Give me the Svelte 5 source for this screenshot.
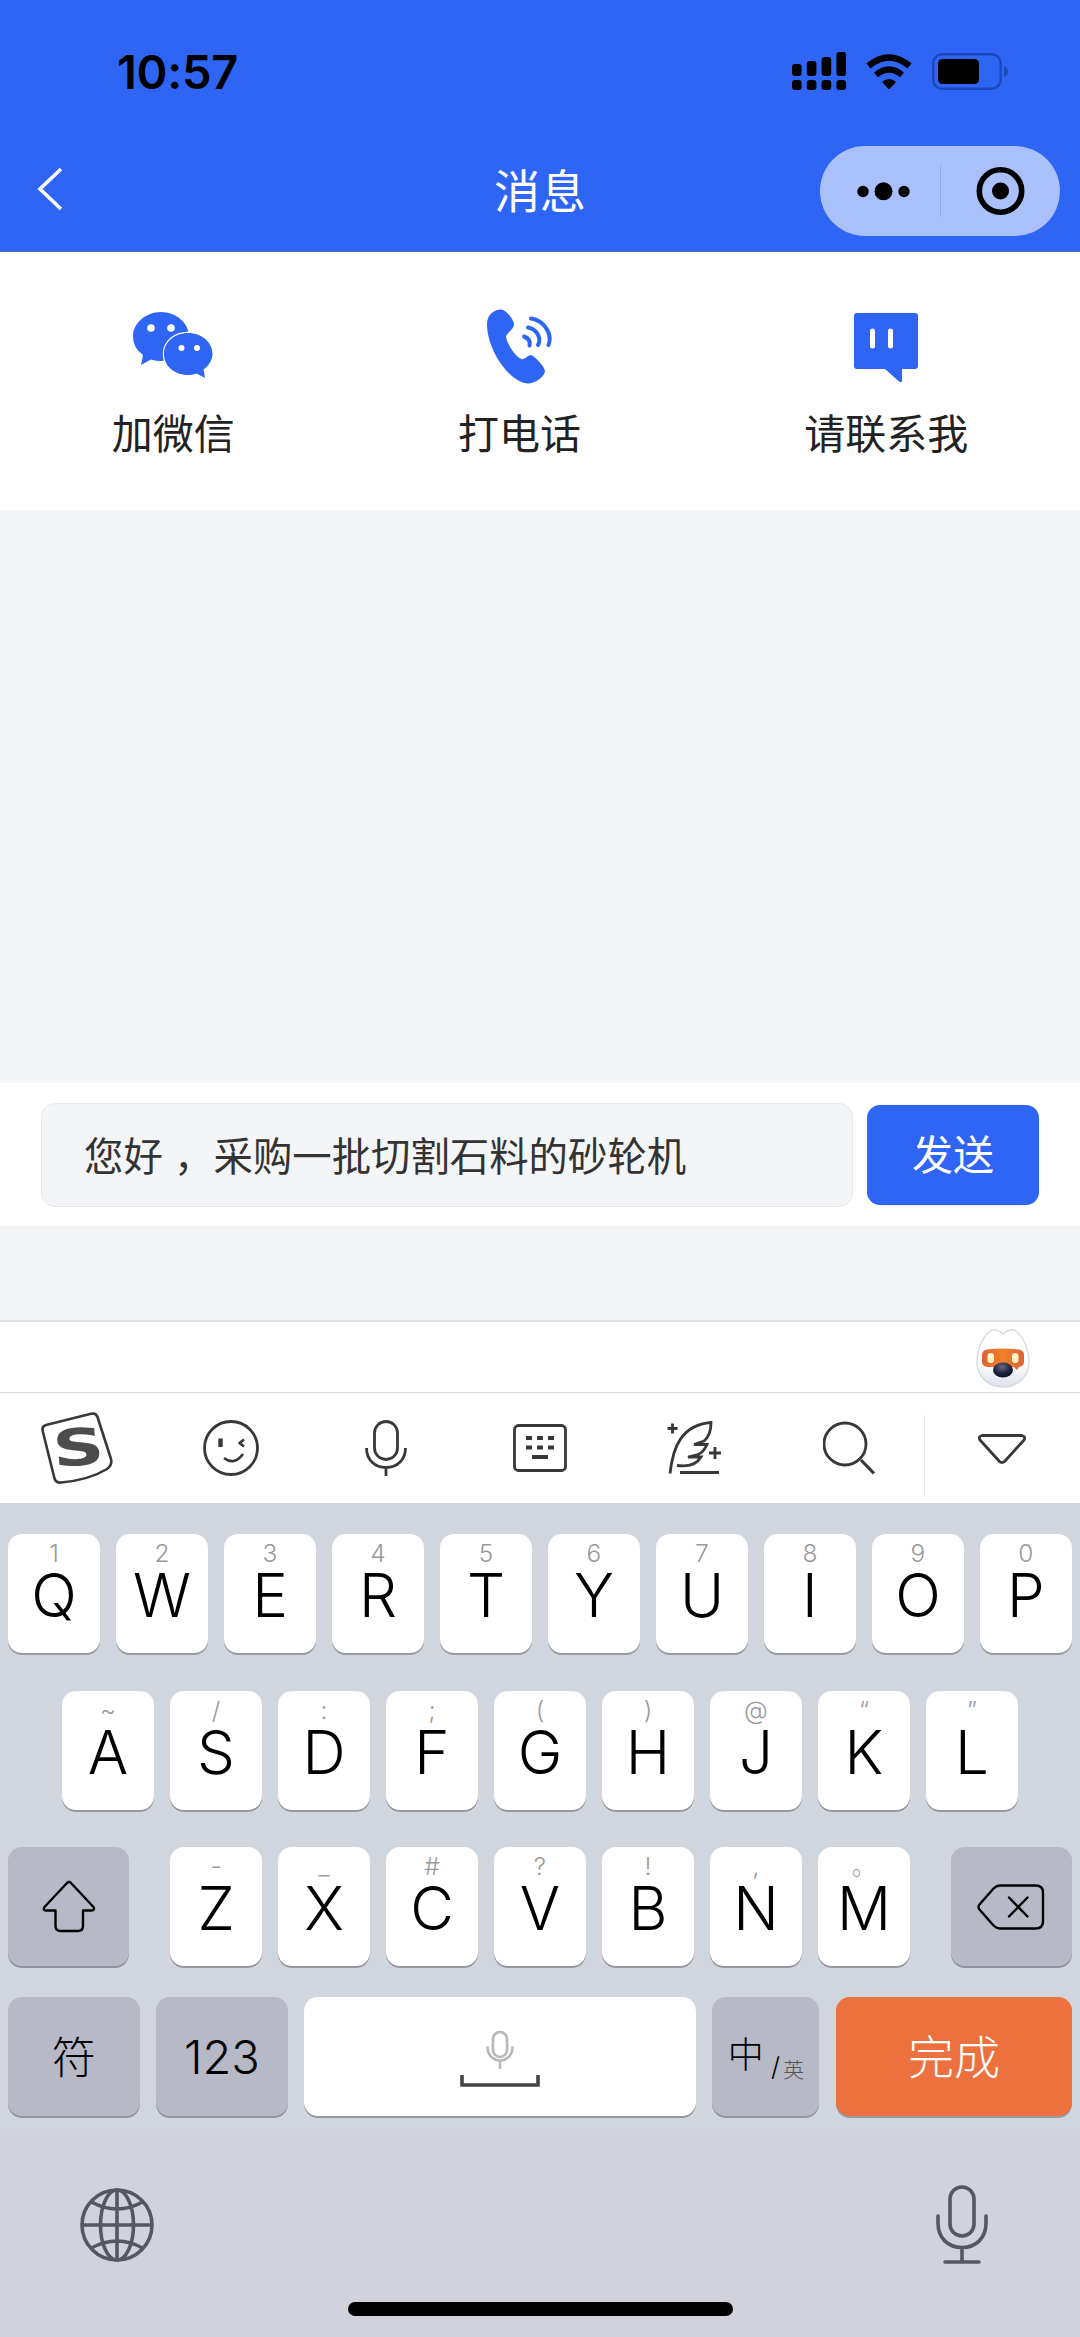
<script>
    let message = '您好 ，采购一批切割石料的砂轮机';

    const signal = [12, 15, 19, 24];

    const topRow = [
        ['Q', '1'], ['W', '2'], ['E', '3'], ['R', '4'], ['T', '5'],
        ['Y', '6'], ['U', '7'], ['I', '8'], ['O', '9'], ['P', '0']
    ];
    const middleRow = [
        ['A', '~'], ['S', '/'], ['D', ':'], ['F', ';'], ['G', '('],
        ['H', ')'], ['J', '@'], ['K', '“'], ['L', '”']
    ];
    const bottomRow = [
        ['Z', '-'], ['X', '_'], ['C', '#'], ['V', '?'], ['B', '!'], ['N', ','], ['M', '。']
    ];
</script>

<div class="screen">
    <header>
        <div class="status">
            <span class="time">10:57</span>
            <div class="status-icons">
                <svg width="54" height="38" viewBox="0 0 54 38">
                    {#each signal as h, i}
                        <rect x={i * 14.8} y={24 - h} width="9.6" height={h} rx="3" />
                        <rect x={i * 14.8} y="28" width="9.6" height="10" rx="3" />
                    {/each}
                </svg>
                <svg class="wifi" width="46" height="35" viewBox="0 0 46 35">
                    <path d="M2.500 12Q23-5 43.500 12" fill="none" stroke="#000" stroke-width="6.500" />
                    <path d="M10 21Q23 10 36 21" fill="none" stroke="#000" stroke-width="6.200" />
                    <path d="M16 28Q23 22 30 28L24 34.500Q23 35.500 22 34.500Z" />
                </svg>
                <svg width="76" height="37" viewBox="0 0 76 37">
                    <rect x="1.200" y="1.200" width="67.500" height="34.500" rx="9" fill="none" stroke="#1c48bc" stroke-width="2.400" />
                    <rect x="6" y="6" width="41" height="25" rx="4.500" />
                    <path d="M72 13Q76 15 76 18.500T72 24Z" fill="#1c48bc" />
                </svg>
            </div>
        </div>
        <div class="nav">
            <svg class="back" width="26" height="44" viewBox="0 0 26 44">
                <path d="M24 2L3 22L24 42" fill="none" stroke="#fff" stroke-width="3.600" />
            </svg>
            <h1>消息</h1>
            <div class="capsule">
                <svg width="120" height="90" viewBox="0 0 120 90">
                    <circle cx="43" cy="45.500" r="5.700" />
                    <circle cx="63.500" cy="45.300" r="9" />
                    <circle cx="84" cy="45.500" r="5.700" />
                </svg>
                <span class="divider"></span>
                <svg width="119" height="90" viewBox="0 0 119 90">
                    <circle cx="59.500" cy="45" r="21.200" fill="none" stroke="#000" stroke-width="5.600" />
                    <circle cx="59.500" cy="45" r="8.500" />
                </svg>
            </div>
        </div>
    </header>

    <section class="actions">
        <button class="action">
            <svg width="80" height="76" viewBox="0 -3 80 76">
                <path d="M28 0C43 0 56 11 56 24.500S43 49 28 49Q23 49 18 47.500L8 53L10 43Q0 36 0 24.500C0 11 13 0 28 0Z" />
                <path d="M55 21C68.500 21 79.500 30 79.500 42Q79.500 51 70.500 57.500L72 66L63.500 61.500Q59 63 55 63C41.500 63 31 54 31 42S41.500 21 55 21Z" stroke="#fff" stroke-width="2.500" paint-order="stroke" />
                <g fill="#fff">
                    <circle cx="18" cy="16" r="3.800" />
                    <circle cx="38" cy="16" r="3.800" />
                    <circle cx="48.500" cy="36" r="3" />
                    <circle cx="64" cy="36" r="3" />
                </g>
            </svg>
            <span>加微信</span>
        </button>
        <button class="action">
            <svg class="phone" width="66" height="76" viewBox="0 0 66 76">
                <path d="M14 0.500C8 0.500 0 5 0 15C0 42 24 75 42 74.500C49 74 58 67 58 62C58 58 48 47 43.500 46C41 46 37 51.500 34 50C27 46 20 34 19 28C19 24 27 21 27 15C27 11 19 0.500 14 0.500Z" />
                <g fill="none" stroke="#2f65f5" stroke-width="4" stroke-linecap="round">
                    <path d="M44 9.500C56 11 66 24 61.500 36" />
                    <path d="M41 18.500C49 20 55 28 51 36" />
                    <path d="M37 27.500Q44 30 42.500 36.500" />
                </g>
            </svg>
            <span>打电话</span>
        </button>
        <button class="action">
            <svg width="64" height="76" viewBox="0 0 64 76">
                <path d="M3 4H61Q64 4 64 7V57Q64 60 61 60H48V72Q48 74 45 72.500L31 60H3Q0 60 0 57V7Q0 4 3 4Z" />
                <path d="M18.500 22V37M36.500 22V37" stroke="#fff" stroke-width="5" stroke-linecap="round" />
            </svg>
            <span>请联系我</span>
        </button>
    </section>

    <main></main>

    <div class="composer">
        <div class="field">{message}</div>
        <button class="send">发送</button>
    </div>

    <div class="keyboard">
        <div class="candidates">
            <svg width="60" height="66" viewBox="0 0 60 66">
                <defs>
                    <linearGradient id="fur" x1="0" y1="0" x2="0" y2="1">
                        <stop offset="0.550" stop-color="#fff" />
                        <stop offset="1" stop-color="#dce1ec" />
                    </linearGradient>
                    <radialGradient id="nose" cx="0.450" cy="0.300" r="0.700">
                        <stop offset="0" stop-color="#666b86" />
                        <stop offset="0.600" stop-color="#20243a" />
                        <stop offset="1" stop-color="#111426" />
                    </radialGradient>
                    <linearGradient id="mask" x1="0" y1="0" x2="1" y2="0">
                        <stop offset="0" stop-color="#dd6238" />
                        <stop offset="0.500" stop-color="#f08128" />
                        <stop offset="1" stop-color="#dd6238" />
                    </linearGradient>
                </defs>
                <path d="M30 5C26 1 20-1 16 3C8 10 4 23 4 33C4 48 16 58 30 58S56 48 56 33C56 23 52 10 44 3C40-1 34 1 30 5Z" fill="url(#fur)" stroke="#d8dae0" stroke-width="1.400" />
                <path d="M14 20.500Q30 18.500 46 20.500Q51 21.500 51 26V33Q51 37 46 38L44 41L41 38H14Q9 37 9 33V26Q9 21.500 14 20.500Z" fill="url(#mask)" />
                <rect x="14.500" y="24" width="6.500" height="10" rx="3.200" fill="#fff3c4" />
                <rect x="39" y="24" width="6.500" height="10" rx="3.200" fill="#fff3c4" />
                <ellipse cx="30" cy="41" rx="10" ry="7.500" fill="url(#nose)" />
            </svg>
        </div>

        <div class="toolbar">
            <div class="tool">
                <svg width="72" height="72" viewBox="0 0 72 72">
                    <path d="M5 13L50 1.700Q55 0.500 56.500 5L70 47Q71.500 53 66 57Q48 68 20 70.500Q15 71 13.500 66.500L1.700 19Q0.500 14.500 5 13Z" stroke-width="2.600" />
                    <text class="logo" transform="translate(13 55) rotate(-4) scale(1.400 1)">S</text>
                </svg>
            </div>
            <div class="tool">
                <svg width="56" height="56" viewBox="0 0 56 56">
                    <circle cx="28" cy="28" r="26.500" />
                    <path d="M17.500 18.500V27" stroke-width="4.400" />
                    <path d="M41 19.500L36.500 23L41 26.500M21 38Q31 46 40 34" stroke-width="2.700" />
                </svg>
            </div>
            <div class="tool">
                <svg width="42" height="56" viewBox="0 0 42 56">
                    <rect x="9.500" y="1.500" width="23" height="38" rx="11.500" />
                    <path d="M1.500 28C1.500 40 10 47.500 21 47.500S40.500 40 40.500 28M21 48V56" />
                </svg>
            </div>
            <div class="tool">
                <svg width="54" height="48" viewBox="0 0 54 48">
                    <rect x="1.500" y="1.500" width="51" height="45" rx="4" />
                    <path d="M13 14H19M24 14H30M35 14H41M13 23.500H19M24 23.500H30M35 23.500H41M19 33H35" stroke-width="4" />
                </svg>
            </div>
            <div class="tool">
                <svg width="54" height="56" viewBox="0 0 54 56">
                    <path d="M3 53.500C6 26 15 5 44 2.500C44 10 42 17 37 21L27 24.500H40C38 29 35 33 31 34.500L21 37H34C30 44 22 47 10 45.500M13 52.500H52" stroke-linejoin="miter" />
                    <path d="M0.500 8.500H10.500M5.500 3.500V13.500M42 33H54M48 27V39" />
                </svg>
            </div>
            <div class="tool">
                <svg width="52" height="54" viewBox="0 0 52 54">
                    <circle cx="22" cy="23" r="21" />
                    <path d="M38 39L51 52.500" stroke-width="3.200" />
                </svg>
            </div>
            <div class="tool last">
                <svg width="48" height="40" viewBox="0 0 48 40">
                    <path d="M4 1.500H44Q48 2.500 46 6L26.500 27.500Q24 29.500 21.500 27.500L2 6Q0 2.500 4 1.500Z" />
                </svg>
            </div>
        </div>

        <div class="keys">
            <div class="row">
                {#each topRow as [letter, hint]}
                    <div class="key"><small>{hint}</small><b>{letter}</b></div>
                {/each}
            </div>
            <div class="row middle">
                {#each middleRow as [letter, hint]}
                    <div class="key"><small>{hint}</small><b>{letter}</b></div>
                {/each}
            </div>
            <div class="row bottom">
                <div class="key dark shift">
                    <svg width="54" height="54" viewBox="0 0 54 54">
                        <path d="M25 3Q27 1 29 3L51.500 27Q53 30.500 49.500 30.500H41V46Q41 51 36 51H18.500Q13.500 51 13.500 46V30.500H4Q0.500 30.500 2.500 27Z" />
                    </svg>
                </div>
                {#each bottomRow as [letter, hint]}
                    <div class="key"><small>{hint}</small><b>{letter}</b></div>
                {/each}
                <div class="key dark delete">
                    <svg width="68" height="46" viewBox="0 0 68 46">
                        <path d="M23 1.500H58.500Q66 1.500 66 8.500V37.500Q66 44.500 58.500 44.500H23Q19.500 44.500 16.500 41.500L2.500 25.500Q0.500 23 2.500 20.500L16.500 4.500Q19.500 1.500 23 1.500ZM32 13.500L50.500 32.500M50.500 13.500L32 32.500" />
                    </svg>
                </div>
            </div>
            <div class="row functions">
                <div class="key dark symbols">符</div>
                <div class="key dark numbers">123</div>
                <div class="key space">
                    <svg width="80" height="58" viewBox="0 0 80 58">
                        <g stroke="#b8b8b8">
                            <rect x="33" y="2" width="14" height="25" rx="7" />
                            <path d="M27.500 16.500C27.500 25 33 30.500 40 30.500S52.500 25 52.500 16.500M40 31V39" />
                        </g>
                        <path d="M2 45V55H78V45" stroke="#444" stroke-width="3.600" />
                    </svg>
                </div>
                <div class="key dark language">
                    <span>中</span><i>/</i><small>英</small>
                </div>
                <div class="key done">完成</div>
            </div>
        </div>

        <footer>
            <div class="system">
                <svg width="76" height="76" viewBox="0 0 76 76">
                    <circle cx="38" cy="38" r="35" />
                    <ellipse cx="38" cy="38" rx="16.500" ry="35" />
                    <path d="M38 3V73M3 38H73M12.500 15Q38 29 63.500 15M12.500 61Q38 47 63.500 61" />
                </svg>
                <svg width="52" height="80" viewBox="0 0 52 80">
                    <rect x="14" y="2" width="24" height="49" rx="12" />
                    <path d="M2 31V38C2 53 12 62.500 26 62.500S50 53 50 38V31M26 63V77M9 77H43" stroke-linecap="round" />
                </svg>
            </div>
            <div class="home-bar"></div>
        </footer>
    </div>
</div>

<style>
    :global(body) {
        margin: 0;
    }

    .screen {
        width: 1080px;
        height: 2337px;
        overflow: hidden;
        display: flex;
        flex-direction: column;
        background: #f4f5f7;
        font-family: Inter, "Noto Sans CJK SC", sans-serif;
    }

    svg {
        display: block;
        flex: none;
    }

    button {
        border: 0;
        padding: 0;
        font-family: inherit;
    }

    header {
        height: 252px;
        box-sizing: border-box;
        background: #2f65f5;
        border-bottom: 1px solid #4a68b8;
    }

    .status {
        height: 146px;
        box-sizing: border-box;
        padding: 0 72px 4px 117px;
        display: flex;
        align-items: center;
        justify-content: space-between;
    }

    .time {
        font-size: 47px;
        font-weight: 600;
        letter-spacing: -0.3px;
    }

    .status-icons {
        display: flex;
        align-items: center;
        gap: 20px;
    }

    .nav {
        height: 90px;
        display: grid;
        grid-template-columns: 1fr auto 1fr;
        align-items: center;
        padding: 0 20px 0 37px;
    }

    .back {
        margin-bottom: 4px;
    }

    h1 {
        margin: 0 17px 0 0;
        color: #fff;
        font-size: 46px;
        font-weight: 400;
        line-height: 60px;
    }

    .capsule {
        justify-self: end;
        height: 90px;
        display: flex;
        align-items: center;
        border-radius: 45px;
        background: #a9c0fa;
    }

    .divider {
        width: 1px;
        height: 52px;
        background: #8ea9ea;
    }

    .actions {
        height: 258px;
        box-sizing: border-box;
        padding-top: 57px;
        display: flex;
        justify-content: space-around;
        background: #fff;
    }

    .action {
        display: flex;
        flex-direction: column;
        align-items: center;
        gap: 19px;
        background: none;
        color: #222;
        fill: #2f65f5;
        font-size: 41px;
        line-height: 60px;
    }

    .phone {
        margin-left: 2px;
    }

    main {
        height: 573px;
    }

    .composer {
        height: 143px;
        box-sizing: border-box;
        padding: 0 41px;
        display: flex;
        align-items: center;
        gap: 14px;
        background: #fff;
    }

    .field {
        flex: 1;
        height: 104px;
        box-sizing: border-box;
        padding: 0 42px;
        border: 1px solid #e6e8eb;
        border-radius: 14px;
        background: #f4f5f7;
        color: #333;
        font-family: "Noto Sans CJK SC", sans-serif;
        font-size: 39.4px;
        line-height: 100px;
        word-spacing: 2.500px;
        white-space: pre;
    }

    .send {
        width: 172px;
        height: 100px;
        border-radius: 13px;
        background: #2f65f5;
        color: #fff;
        font-size: 41px;
        line-height: 100px;
    }

    .keyboard {
        margin-top: 94px;
        flex: 1;
        display: flex;
        flex-direction: column;
        background: #d1d5de;
    }

    .candidates {
        height: 73px;
        box-sizing: border-box;
        padding: 7px 47px 0 0;
        display: flex;
        justify-content: flex-end;
        background: #fff;
        border-top: 2px solid #dfe0e2;
        border-bottom: 1px solid #d8d9dc;
    }

    .toolbar {
        height: 110px;
        display: grid;
        grid-template-columns: repeat(7, 1fr);
        background: #fff;
    }

    .tool {
        display: flex;
        align-items: center;
        justify-content: center;
        fill: none;
        stroke: #383838;
        stroke-width: 2.8;
        stroke-linejoin: round;
    }

    .last {
        border-left: 1px solid #e7e8ea;
        margin: 22px 0 7px -2px;
        padding-bottom: 4px;
    }

    .logo {
        fill: #4c4c4c;
        stroke: none;
        font-family: "DejaVu Sans", sans-serif;
        font-size: 51px;
        font-weight: 700;
    }

    .keys {
        padding: 31px 8px 0;
    }

    .row {
        display: flex;
        justify-content: center;
        gap: 16.6px;
        height: 119px;
        margin-bottom: 38px;
    }

    .key {
        width: 91.400px;
        flex: none;
        display: flex;
        flex-direction: column;
        align-items: center;
        border-radius: 14px;
        background: #fff;
        box-shadow: 0 2px 0 #97999f;
        color: #000;
    }

    .key small {
        margin-top: 7px;
        height: 25px;
        color: #999;
        font-size: 24.500px;
        font-weight: 300;
        line-height: 25px;
    }

    .key b {
        font-size: 60px;
        font-weight: 300;
        line-height: 58px;
    }

    .dark {
        background: #b7bac6;
        box-shadow: 0 2px 0 #92959f;
        fill: none;
        stroke: #000;
        stroke-width: 2.400;
        stroke-linejoin: round;
        stroke-linecap: round;
        justify-content: center;
    }

    .middle {
        margin-bottom: 37px;
    }

    .bottom {
        margin-bottom: 31px;
    }

    .shift,
    .delete {
        width: 121px;
    }

    .shift {
        margin-right: 24.500px;
    }

    .delete {
        margin-left: 24.500px;
    }

    .functions {
        margin: 0;
    }

    .symbols,
    .numbers {
        width: 131.500px;
        font-weight: 300;
        font-size: 47px;
    }

    .symbols {
        height: 115px;
        padding-bottom: 4px;
        font-size: 44px;
    }

    .space {
        flex: 1;
        fill: none;
        stroke-width: 2.600;
        justify-content: flex-end;
    }

    .space svg {
        margin: 0 0 28px;
    }

    .language {
        width: 107px;
        flex-direction: row;
    }

    .language span {
        font-size: 36px;
        font-weight: 300;
        margin-bottom: 9px;
    }

    .language i {
        font-size: 26px;
        font-style: normal;
        font-weight: 300;
        margin: 20px 3px 0 7px;
    }

    .language small {
        margin-top: 26px;
        font-size: 21px;
        color: #555;
    }

    .done {
        width: 236px;
        height: 114px;
        padding-bottom: 5px;
        justify-content: center;
        background: #ed703f;
        color: #fff;
        font-size: 46px;
        font-weight: 300;
    }

    footer {
        flex: 1;
        margin-top: 14px;
        background: #d1d2dc;
    }

    .system {
        padding: 55px 92px 0 79px;
        display: flex;
        justify-content: space-between;
        align-items: center;
        fill: none;
        stroke: #555763;
        stroke-width: 3.600;
    }

    .home-bar {
        width: 385px;
        height: 14px;
        margin: 37px auto 0;
        border-radius: 7px;
        background: #000;
    }
</style>
